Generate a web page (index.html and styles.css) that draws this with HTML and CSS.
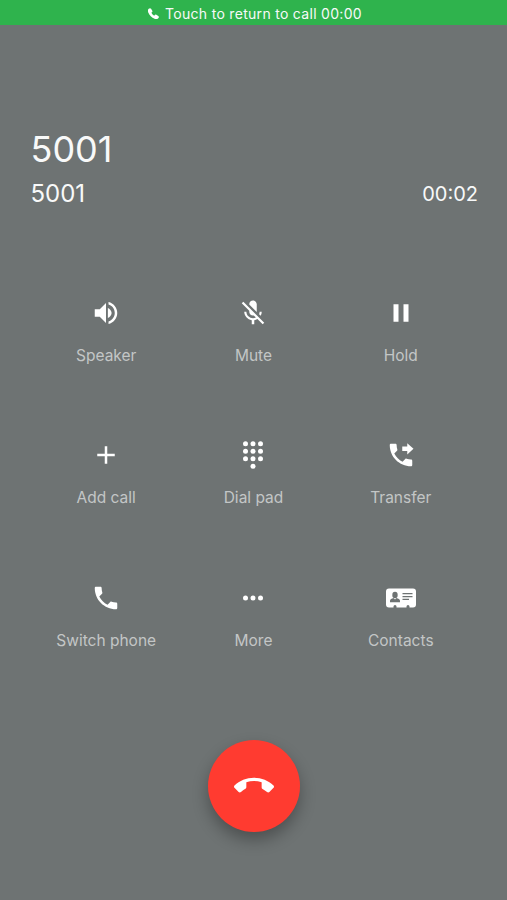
FILE: index.html
```html
<!DOCTYPE html>
<html lang="en">
<head>
    <meta charset="UTF-8">
    <meta name="viewport" content="width=device-width, initial-scale=1.0">
    <title>Call</title>
    <link rel="stylesheet" href="styles.css">
</head>
<body>
    <div class="return-bar">
        <svg class="return-icon" viewBox="3 3 18 18"><path d="M4.200 4.200C5.500 3 7 2.800 8 4.200l2 3.200c.6 1 .4 1.900-.5 2.600l-1 .8c1.100 2 2.700 3.600 4.700 4.700l.8-1c.7-.9 1.600-1.100 2.600-.5l3.200 2c1.400 1 1.200 2.500 0 3.800-1.500 1.600-3.700 1.700-6 .8C9 18.700 5.300 15 3.400 10.200c-.9-2.300-.8-4.500.8-6z"/></svg>
        <span>Touch to return to call 00:00</span>
    </div>

    <div class="call-info">
        <h1>5001</h1>
        <div class="call-line">
            <span class="number">5001</span>
            <span class="timer">00:02</span>
        </div>
    </div>

    <div class="actions">
        <button type="button" class="action">
            <svg viewBox="0 0 24 24"><path d="M3 9v6h4l5 5V4L7 9H3zm10.500-1.030v8.050c1.480-.73 3-2.250 3-4.020s-1.520-3.290-3-4.030zM14 3.230v2.060c2.890.86 5 3.540 5 6.710s-2.110 5.850-5 6.710v2.060c4.010-.91 7-4.490 7-8.770s-2.990-7.860-7-8.770z"/></svg>
            <span>Speaker</span>
        </button>
        <button type="button" class="action">
            <svg viewBox="0 0 24 24"><path d="M19 11h-1.700c0 .74-.16 1.430-.43 2.050l1.230 1.230c.56-.98.900-2.090.900-3.280zm-4.020.170c0-.06.020-.11.020-.17V5c0-1.660-1.340-3-3-3S9 3.340 9 5v.18l5.980 5.990zM4.270 3L3 4.270l6.010 6.010V11c0 1.660 1.330 3 2.990 3 .22 0 .44-.03.65-.08l1.660 1.660c-.71.33-1.500.52-2.310.52-2.760 0-5.300-2.100-5.300-5.100H5c0 3.410 2.720 6.230 6 6.720V21h2v-3.280c.91-.13 1.770-.45 2.540-.9L19.730 21 21 19.730 4.270 3z"/></svg>
            <span>Mute</span>
        </button>
        <button type="button" class="action">
            <svg viewBox="0 0 24 24"><path d="M6 19h4V5H6v14zm8-14v14h4V5h-4z"/></svg>
            <span>Hold</span>
        </button>
        <button type="button" class="action">
            <svg viewBox="0 0 24 24"><path d="M19 13h-6v6h-2v-6H5v-2h6V5h2v6h6v2z"/></svg>
            <span>Add call</span>
        </button>
        <button type="button" class="action">
            <svg viewBox="0 0 24 24">
                <circle cx="6" cy="3" r="2"/><circle cx="12" cy="3" r="2"/><circle cx="18" cy="3" r="2"/>
                <circle cx="6" cy="9" r="2"/><circle cx="12" cy="9" r="2"/><circle cx="18" cy="9" r="2"/>
                <circle cx="6" cy="15" r="2"/><circle cx="12" cy="15" r="2"/><circle cx="18" cy="15" r="2"/>
                <circle cx="12" cy="21" r="2"/>
            </svg>
            <span>Dial pad</span>
        </button>
        <button type="button" class="action">
            <svg viewBox="0 0 24 24"><path d="M17 11.500l5-4.500-5-4.500v2.700h-4v3.600h4v2.700zm3 4c-1.250 0-2.450-.2-3.570-.57-.35-.11-.74-.03-1.020.24l-2.200 2.200c-2.830-1.440-5.150-3.750-6.590-6.590l2.200-2.210c.28-.26.360-.65.250-1C8.700 6.450 8.500 5.250 8.500 4c0-.55-.45-1-1-1H4c-.55 0-1 .45-1 1 0 9.390 7.610 17 17 17 .55 0 1-.45 1-1v-3.500c0-.55-.45-1-1-1z"/></svg>
            <span>Transfer</span>
        </button>
        <button type="button" class="action">
            <svg viewBox="0 0 24 24"><path d="M20 15.500c-1.250 0-2.450-.2-3.570-.57-.35-.11-.74-.03-1.020.24l-2.200 2.200c-2.830-1.440-5.150-3.750-6.590-6.590l2.200-2.210c.28-.26.360-.65.250-1C8.700 6.450 8.500 5.250 8.500 4c0-.55-.45-1-1-1H4c-.55 0-1 .45-1 1 0 9.390 7.610 17 17 17 .55 0 1-.45 1-1v-3.500c0-.55-.45-1-1-1z"/></svg>
            <span>Switch phone</span>
        </button>
        <button type="button" class="action">
            <svg viewBox="0 0 24 24"><circle cx="6" cy="12" r="2"/><circle cx="12" cy="12" r="2"/><circle cx="18" cy="12" r="2"/></svg>
            <span>More</span>
        </button>
        <button type="button" class="action">
            <svg viewBox="0 0 30 30">
                <path d="M3 5.500h24a3 3 0 0 1 3 3v13a3 3 0 0 1-3 3h-3.500v-1a1.500 1.500 0 0 0-3 0v1h-10v-1a1.500 1.500 0 0 0-3 0v1H3a3 3 0 0 1-3-3v-13a3 3 0 0 1 3-3z"/>
                <g class="card-detail">
                    <ellipse cx="9" cy="12" rx="2.700" ry="3.200"/>
                    <path d="M4 19.300v-1.500c0-1.500 1.700-2.200 3.500-2.800L9 16.500l1.500-1.500c1.800.6 3.500 1.300 3.500 2.800v1.500z"/>
                    <path d="M16.500 10h10v1.300h-10zM16.500 12.900h10v1.300h-10zM16.500 15.800h6.500v1.300h-6.500z"/>
                </g>
            </svg>
            <span>Contacts</span>
        </button>
    </div>

    <button type="button" class="end-call" aria-label="End call">
        <svg viewBox="0 0 24 24"><path d="M12 9c-1.600 0-3.150.25-4.600.72v3.100c0 .39-.23.740-.56.900-.98.490-1.870 1.120-2.660 1.850-.18.180-.43.280-.7.280-.28 0-.53-.11-.71-.29L.29 13.080c-.18-.17-.29-.42-.29-.7 0-.28.110-.53.290-.71C3.340 8.780 7.460 7 12 7s8.660 1.780 11.710 4.670c.18.180.290.430.290.710 0 .28-.11.530-.29.710l-2.480 2.480c-.18.180-.43.290-.71.290-.27 0-.52-.11-.7-.28-.79-.74-1.690-1.360-2.670-1.850-.33-.16-.56-.5-.56-.9v-3.100C15.150 9.250 13.600 9 12 9z"/></svg>
    </button>
</body>
</html>
```
FILE: styles.css
```css
body {
    margin: 0;
    height: 900px;
    overflow: hidden;
    background-color: #6e7373;
    color: #f8f9f9;
    font-family: Inter, "Liberation Sans", sans-serif;
}
svg {
    display: block;
    fill: #fff;
}
button {
    padding: 0;
    border: none;
    background: none;
    color: inherit;
    font-family: inherit;
    cursor: pointer;
}
.return-bar {
    display: flex;
    align-items: center;
    justify-content: center;
    gap: 6px;
    height: 25px;
    padding: 2px 0 0 3px;
    box-sizing: border-box;
    background-color: #2fb34d;
    font-size: 14px;
    letter-spacing: 0.3px;
}
.return-icon {
    width: 11px;
    height: 11px;
}
.call-info {
    padding: 102px 29px 0 30.5px;
}
h1 {
    margin: 0;
    font-size: 36px;
    font-weight: 400;
    line-height: 44px;
}
.call-line {
    display: flex;
    align-items: center;
    justify-content: space-between;
    height: 45px;
}
.number {
    font-size: 24px;
}
.timer {
    font-size: 20px;
    padding-top: 1px;
}
.actions {
    display: grid;
    grid-template-columns: repeat(3, 147.3px);
    grid-auto-rows: 142.2px;
    justify-content: center;
    padding-top: 82.3px;
}
.action {
    display: flex;
    flex-direction: column;
    align-items: center;
    justify-content: flex-start;
    gap: 18px;
    font-size: 15.5px;
    line-height: 20px;
    color: #c3c6c6;
}
.action svg {
    width: 30px;
    height: 30px;
}
.action .card-detail {
    fill: #6e7373;
}
.end-call {
    display: flex;
    align-items: center;
    justify-content: center;
    width: 92px;
    height: 92px;
    margin: 15px auto 0;
    border-radius: 50%;
    background-color: #ff3b30;
    box-shadow: 0 8px 16px rgba(0, 0, 0, 0.3);
}
.end-call svg {
    width: 40px;
    height: 40px;
}
```
